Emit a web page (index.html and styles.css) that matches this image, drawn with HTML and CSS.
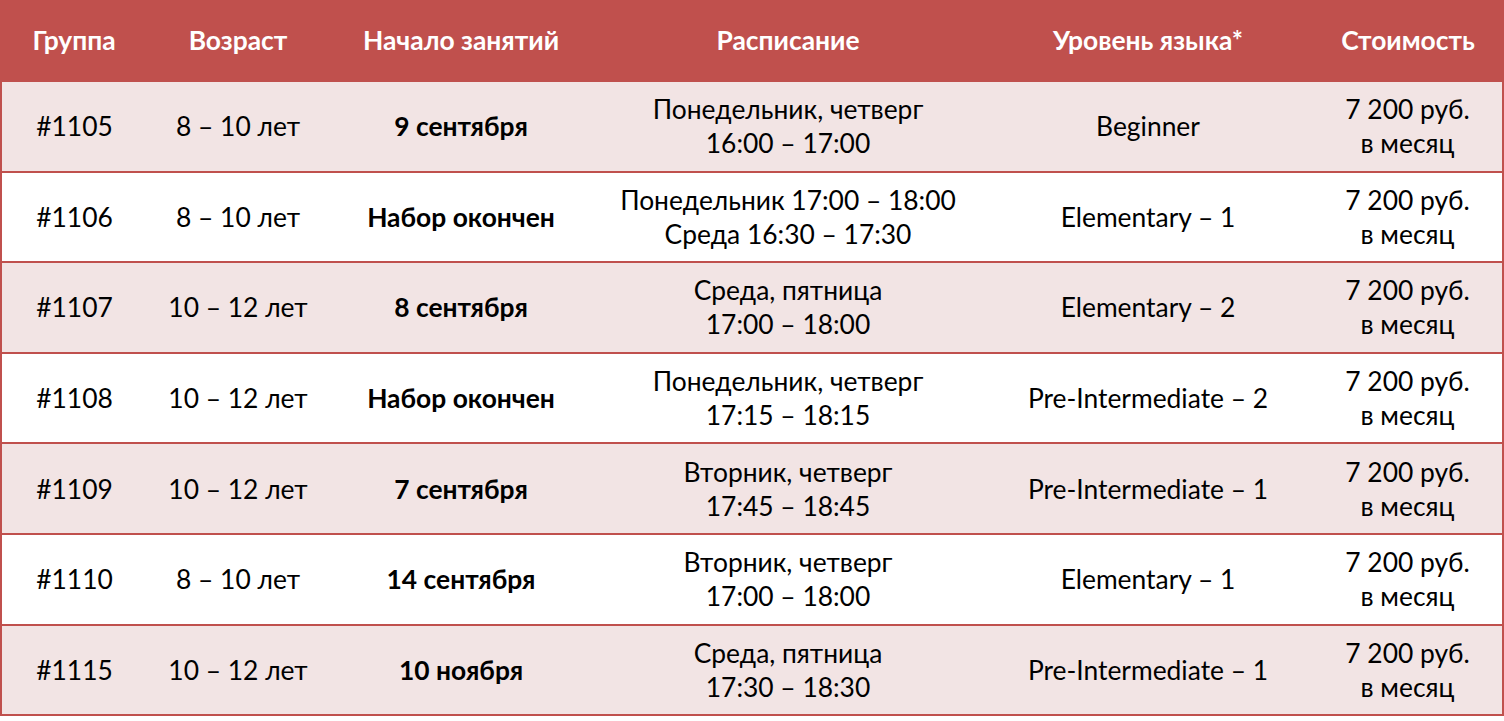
FILE: index.html
```html
<!DOCTYPE html>
<html lang="ru">
<head>
<meta charset="utf-8">
<title>Расписание групп</title>
<link rel="stylesheet" href="styles.css">
</head>
<body>
<table class="schedule">
  <colgroup>
    <col class="c1"><col class="c2"><col class="c3"><col class="c4"><col class="c5"><col class="c6">
  </colgroup>
  <thead>
    <tr>
      <th>Группа</th><th>Возраст</th><th>Начало занятий</th><th>Расписание</th><th>Уровень языка*</th><th>Стоимость</th>
    </tr>
  </thead>
  <tbody>
    <tr class="odd">
      <td>#1105</td><td>8 – 10 лет</td><td class="b">9 сентября</td><td>Понедельник, четверг<br>16:00 – 17:00</td><td>Beginner</td><td>7 200 руб.<br>в месяц</td>
    </tr>
    <tr>
      <td>#1106</td><td>8 – 10 лет</td><td class="b">Набор окончен</td><td>Понедельник 17:00 – 18:00<br>Среда 16:30 – 17:30</td><td>Elementary – 1</td><td>7 200 руб.<br>в месяц</td>
    </tr>
    <tr class="odd">
      <td>#1107</td><td>10 – 12 лет</td><td class="b">8 сентября</td><td>Среда, пятница<br>17:00 – 18:00</td><td>Elementary – 2</td><td>7 200 руб.<br>в месяц</td>
    </tr>
    <tr>
      <td>#1108</td><td>10 – 12 лет</td><td class="b">Набор окончен</td><td>Понедельник, четверг<br>17:15 – 18:15</td><td>Pre-Intermediate – 2</td><td>7 200 руб.<br>в месяц</td>
    </tr>
    <tr class="odd">
      <td>#1109</td><td>10 – 12 лет</td><td class="b">7 сентября</td><td>Вторник, четверг<br>17:45 – 18:45</td><td>Pre-Intermediate – 1</td><td>7 200 руб.<br>в месяц</td>
    </tr>
    <tr>
      <td>#1110</td><td>8 – 10 лет</td><td class="b">14 сентября</td><td>Вторник, четверг<br>17:00 – 18:00</td><td>Elementary – 1</td><td>7 200 руб.<br>в месяц</td>
    </tr>
    <tr class="odd">
      <td>#1115</td><td>10 – 12 лет</td><td class="b">10 ноября</td><td>Среда, пятница<br>17:30 – 18:30</td><td>Pre-Intermediate – 1</td><td>7 200 руб.<br>в месяц</td>
    </tr>
  </tbody>
</table>
</body>
</html>
```
FILE: styles.css
```css
html, body {
  margin: 0;
  padding: 0;
  background: #ffffff;
}
.schedule {
  width: 1502px;
  table-layout: fixed;
  border-collapse: collapse;
  font-family: "Lato", "Open Sans", sans-serif;
  font-size: 26.4px;
  color: #000000;
}
.c1 { width: 146px; }
.c2 { width: 182px; }
.c3 { width: 264px; }
.c4 { width: 390px; }
.c5 { width: 330px; }
.c6 { width: 190px; }
.schedule th {
  background: #c0504d;
  color: #ffffff;
  font-weight: 700;
  height: 80px;
  padding: 0;
  text-align: center;
  vertical-align: middle;
  border-left: 2px solid #c0504d;
  border-right: 2px solid #c0504d;
}
.schedule td {
  height: 88.6px;
  padding: 0;
  text-align: center;
  vertical-align: middle;
  line-height: 34px;
  border-top: 2px solid #c0504d;
  border-bottom: 2px solid #c0504d;
}
.schedule td:first-child { border-left: 2px solid #c0504d; }
.schedule td:last-child { border-right: 2px solid #c0504d; }
.schedule tr.odd td { background: #f2e4e4; }
.schedule td.b { font-weight: 700; }
```
